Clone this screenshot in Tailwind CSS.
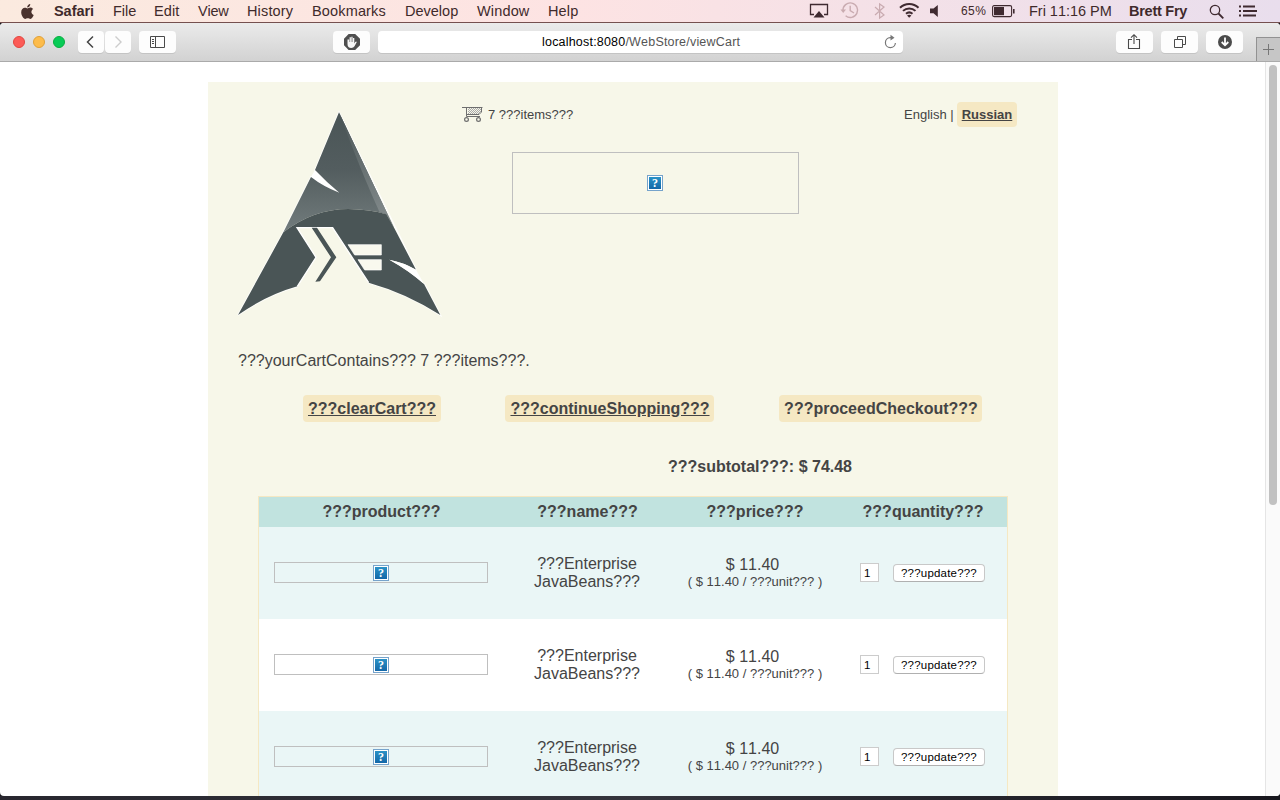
<!DOCTYPE html>
<html lang="en">
<head>
<meta charset="utf-8">
<title>WebStore cart</title>
<script src="https://cdn.jsdelivr.net/npm/@tailwindcss/browser@4"></script>
</head>
<body class="h-[800px] w-[1280px] overflow-hidden bg-[#17161c] font-['Liberation_Sans',sans-serif] text-[#444] [font-kerning:none]">
<div class="flex h-full flex-col">
  <!-- Menu bar -->
  <div class="flex h-[23px] shrink-0 items-center border-b border-[#75504f] bg-linear-to-r from-[#fbeadf] via-[#fde3e3] via-45% to-[#e9deed] text-[14.5px] leading-[22px] tracking-[0.15px] text-[#3f2a2b]">
    <div class="w-[54px] shrink-0 pl-[20px]"><svg width="15" height="17" viewBox="0 0 15 17" fill="#4a322e"><path d="M10.3 1C10.3 2.9 8.9 4.5 7.2 4.5 7 2.8 8.6 1.1 10.3 1ZM7.4 5.4C8.1 5.4 9 4.6 10.3 4.6 11.4 4.6 12.5 5.2 13.2 6.1 10.6 7.5 11 11.1 13.7 12.1 13.1 13.7 11.9 15.9 10.4 15.9 9.4 15.9 9 15.3 7.8 15.3 6.5 15.3 6.1 15.9 5.2 15.9 3.6 15.9 1.2 12.7 1.2 9.3 1.2 6.3 3 4.7 4.9 4.7 6 4.7 6.8 5.4 7.4 5.4Z"/></svg></div>
    <b class="w-[59px] shrink-0 tracking-[-0.05px]">Safari</b>
    <span class="w-[41px] shrink-0 tracking-[-0.05px]">File</span>
    <span class="w-[44px] shrink-0 tracking-[0.1px]">Edit</span>
    <span class="w-[49px] shrink-0 tracking-[-0.2px]">View</span>
    <span class="w-[65px] shrink-0">History</span>
    <span class="w-[93px] shrink-0">Bookmarks</span>
    <span class="w-[72px] shrink-0 tracking-[0px]">Develop</span>
    <span class="w-[71px] shrink-0">Window</span>
    <span class="w-[256px] shrink-0">Help</span>
    <svg class="shrink-0" width="152" height="22" viewBox="804 0 152 22" fill="none" stroke="#3f2a30">
      <path d="M814 14.500H810.500V4.500H827.500V14.500H824" stroke-width="1.300"/><path d="M819 11l5.500 6.500h-11z" fill="#3f2a30" stroke="none"/>
      <g stroke="#c9abb0" stroke-width="1.400"><path d="M843 10.500A7.300 7.300 0 1 1 845.600 15.800"/><path d="M850.200 5.800V10.600L854 13"/><path d="M840.500 9.500h5.500l-2.800 3.400z" fill="#c9abb0" stroke="none"/><path d="M875 7l9 8-4.400 3V4l4.400 3-9 8" stroke-width="1.200"/></g>
      <g stroke-width="2"><path d="M900 7.800a13 13 0 0 1 18.500 0"/><path d="M903 10.900a9 9 0 0 1 12.500 0"/><path d="M906 13.800a5 5 0 0 1 6.500 0"/></g><path d="M909.200 17.800l-2.200-2.400q2.200-1.500 4.400 0z" fill="#3f2a30" stroke="none"/>
      <path d="M930 8.500h3.500l4.300-3.600v12l-4.300-3.700H930z" fill="#3f2a30" stroke="none"/>
    </svg>
    <span class="w-[36px] shrink-0 pl-[5px] text-[12px] tracking-[0.45px]">65%</span>
    <svg class="shrink-0" width="37" height="22" viewBox="992 0 37 22"><rect x="992.600" y="5.600" width="19" height="11" rx="1.500" fill="none" stroke="#3f2a30" stroke-width="1.100"/><path d="M994 7h10v8.200h-10z" fill="#3f2a30"/><path d="M1013 9h1.600v4.500h-1.600z" fill="#3f2a30"/></svg>
    <span class="w-[100px] shrink-0 tracking-[-0.02px] whitespace-nowrap">Fri 11:16 PM</span>
    <b class="w-[71px] shrink-0 tracking-[-0.25px] whitespace-nowrap">Brett Fry</b>
    <svg class="shrink-0" width="80" height="22" viewBox="1200 0 80 22" fill="none" stroke="#3f2a30"><circle cx="1215" cy="10" r="4.700" stroke-width="1.300"/><path d="M1218.500 13.500l4.800 4.800" stroke-width="1.800"/><path d="M1239 6.500h2m-2 4.500h2m-2 4.500h2M1243 6.500h12M1243 11h14M1243 15.500h13" stroke-width="1.800"/></svg>
  </div>
  <!-- Safari window -->
  <div class="flex h-[773px] shrink-0 flex-col overflow-hidden rounded-[4px] bg-white">
    <div class="flex h-[39px] shrink-0 border-b border-[#aaa] bg-linear-to-b from-[#ebebeb] to-[#d2d2d2]">
      <div class="flex w-[78px] gap-[8px] pt-[13px] pl-[13px]">
        <i class="size-[12px] rounded-full border border-[#e2463f] bg-[#fc5b57]"></i><i class="size-[12px] rounded-full border border-[#e0a138] bg-[#fdbc4b]"></i><i class="size-[12px] rounded-full border border-[#08ae40] bg-[#08cb56]"></i>
      </div>
      <div class="flex pt-[8px] *:h-[22px] *:shrink-0 *:rounded-[4px] *:bg-[#fdfdfd] *:shadow-[0_1px_0_#c4c4c4]">
        <div class="w-[26px]"><svg width="26" height="22" fill="none" stroke="#444" stroke-width="1.500"><path d="M15 5.500L9.500 11l5.500 5.500"/></svg></div>
        <div class="ml-px w-[26px]"><svg width="26" height="22" fill="none" stroke="#ccc" stroke-width="1.400"><path d="M10.500 5.500L16 11l-5.500 5.500"/></svg></div>
        <div class="ml-[8px] w-[37px]"><svg width="37" height="22" fill="none" stroke="#4a4a4a"><path d="M11.500 5.500h14v11h-14zM16.500 5.500v11M13 8.500h2M13 10.500h2M13 12.500h2"/></svg></div>
        <div class="ml-[157px] w-[37px]"><svg width="37" height="22"><path d="M15.600 3h6.600l4.800 4.700v6.600L22.200 19h-6.600L11 14.300V7.700z" fill="#4f4f4f"/><path d="M14.500 8.500v4.500q0 4 3.800 4 2.200 0 3.200-1.800l2.300-4.300q-.8-.8-1.600.2l-.9 1.300V7h-1.300v4h-.4V5.800h-1.300V11h-.4V6.300h-1.300V11h-.4V8.500z" fill="#f7f7f7"/></svg></div>
        <div class="ml-[8px] flex w-[525px] items-center bg-white! text-[12.5px]"><span class="w-[501px] pt-px pl-[164px] tracking-[0.2px] whitespace-nowrap text-[#555]"><span class="text-black">localhost:8080</span>/WebStore/viewCart</span><svg width="22" height="22" fill="none" stroke="#777" stroke-width="1.200"><path d="M12.600 6.700H11.200A5 5 0 1 0 16.400 12"/><path d="M11.500 3.800l4 3-4 2.800z" fill="#777" stroke="none"/></svg></div>
        <div class="ml-[213px] w-[37px]"><svg width="37" height="22" fill="none" stroke="#4a4a4a" stroke-width="1.100"><path d="M16 8.500h-3.500v9h11v-9H20M18 13V3.800M15 6.700l3-3 3 3"/></svg></div>
        <div class="ml-[8px] w-[37px]"><svg width="37" height="22" fill="none" stroke="#4a4a4a"><path d="M13.500 8.500h8v8h-8zM16.500 8.500v-3h8v8h-3"/></svg></div>
        <div class="ml-[8px] w-[37px]"><svg width="37" height="22"><circle cx="19" cy="11" r="7" fill="#4b4b4b"/><path d="M19 6.500v7M15.700 11l3.300 3.300 3.300-3.300" fill="none" stroke="#fff" stroke-width="1.800"/></svg></div>
      </div>
      <div class="mt-[14px] ml-[13px] h-[24px] w-[24px] shrink-0 border-t border-l border-[#929292] bg-[#c6c6c6]"><svg width="23" height="23" stroke="#777"><path d="M6 11.500h11M11.500 6v11"/></svg></div>
    </div>
    <div class="flex min-h-0 flex-1">
      <div class="flex-1 pt-[20px] pl-[208px]">
        <div class="h-[714px] w-[850px] bg-[#f7f7e9]">
          <!-- Page header -->
          <div class="flex h-[258px]">
            <svg class="mt-[13px] ml-[12px] shrink-0" width="240" height="230" viewBox="0 0 720 690">
              <defs>
                <linearGradient id="up" x1="0" y1="50" x2="0" y2="400" gradientUnits="userSpaceOnUse"><stop offset="0" stop-color="#4a5556"/><stop offset=".5" stop-color="#535d5f"/><stop offset="1" stop-color="#707a7b"/></linearGradient>
                <linearGradient id="edge" x1="360" y1="60" x2="500" y2="370" gradientUnits="userSpaceOnUse"><stop offset="0" stop-color="#4c5758"/><stop offset="1" stop-color="#838b8c"/></linearGradient>
              </defs>
              <path d="M232 574Q140 600 54 660L190 412 273 246Q310 275 358 293L285 225 357 52 588 524M612 565L661 660Q560 595 446 563" fill="none" stroke="#fff" stroke-width="5" opacity=".8"/>
              <path d="M285 225Q320 262 358 293Q310 275 273 246Z" fill="#fff"/>
              <path d="M357 52L285 225Q320 262 358 293Q310 275 273 246L190 412Q280 342 385 342 450 343 499 358L523 400Z" fill="url(#up)"/>
              <path d="M357 52L523 400 499 358 478 350Q425 235 357 52Z" fill="url(#edge)"/>
              <path d="M190 412Q280 342 385 342 450 343 499 358L523 400 588 524Q550 502 508 494 572 530 612 567L661 660Q560 595 446 563L338 398H231L288 487 232 574Q140 600 54 660Z" fill="#4a5556"/>
              <path d="M446 563L338 398H231L288 487 232 574" fill="none" stroke="#fff" stroke-width="4"/>
              <path d="M275 398H291L349 487 300 559 286 560 333 487Z" fill="#4a5556"/>
              <path d="M384 449H484V480H404ZM414 494H484V525H434Z" fill="#f9f9ee" stroke="#fff" stroke-width="2"/>
              <path d="M508 494Q550 502 588 524L612 567Q565 525 508 494Z" fill="#fff"/>
            </svg>
            <div class="w-[442px] shrink-0 pl-[2px]">
              <div class="flex h-[70px] pt-[24px] text-[13px] leading-[17px]"><svg width="22" height="17" fill="none" stroke="#6e6e6e"><path d="M0 1.500h20.500M4.500 2v8.500h13.500M4.500 8.500h12.500l2.500-2.500v-4.500"/><path d="M6 3.500h13M6 5.500h13M6 7.500h11" stroke="#aaa" stroke-dasharray="1 1"/><path d="M7 2.500h12M7 4.500h12M7 6.500h11" stroke="#aaa" stroke-dasharray="1 1"/><circle cx="4.500" cy="13.500" r="1.900" stroke-width="1.200"/><circle cx="16.500" cy="13.500" r="1.900" stroke-width="1.200"/></svg><span class="ml-[4px]">7 ???items???</span></div>
              <div class="ml-[50px] flex h-[62px] w-[287px] items-center justify-center border border-[#bfbfbf] pr-px">
                <div class="size-[16px] border border-[#76a3cb] bg-white p-px"><div class="size-[12px] bg-linear-to-b from-[#2a92c6] to-[#1468a8] text-center font-['Liberation_Serif',serif] text-[12px] leading-[12px] font-bold text-white">?</div></div>
              </div>
            </div>
            <div class="mt-[20px] ml-[2px] flex h-[25px] text-[13px] leading-[25px] whitespace-nowrap"><span class="w-[53px]">English |</span><b class="w-[60px] rounded-[4px] bg-[#f5e8c3] text-center underline">Russian</b></div>
          </div>
          <p class="h-[55px] pt-[12px] pl-[30px] text-[16px] leading-[18px]">???yourCartContains??? 7 ???items???.</p>
          <div class="flex h-[61px] pl-[95px] text-[16px] leading-[27px] font-bold *:h-[27px] *:rounded-[4px] *:bg-[#f5e8c3] *:text-center">
            <a class="w-[138px] underline">???clearCart???</a><a class="ml-[64px] w-[209px] pl-px underline">???continueShopping???</a><a class="ml-[65px] w-[203px] pl-px">???proceedCheckout???</a>
          </div>
          <p class="h-[40px] pt-[2px] pl-[460px] text-[16px] leading-[18px] font-bold">???subtotal???: $ 74.48</p>
          <!-- Cart table -->
          <div class="ml-[50px] h-[300px] w-[750px] overflow-hidden border border-b-0 border-[#f5e8c3] text-[16px]">
            <div class="grid h-[30px] grid-cols-[244px_168px_168px_168px] bg-[#c1e3df] text-center leading-[30px] font-bold"><span class="pl-px">???product???</span><span class="pl-px">???name???</span><span>???price???</span><span>???quantity???</span></div>
            <div id="rows"></div>
          </div>
        </div>
      </div>
      <div class="w-[15px] shrink-0 border-l border-[#e5e5e5] bg-[#fafafa] pt-[3px] pl-[3px]"><div class="h-[440px] w-[8px] rounded-full bg-[#c1c1c1]"></div></div>
    </div>
  </div>
  <div class="h-[4px] bg-linear-to-r from-[#28272f] via-[#34343c] to-[#18171e]"></div>
</div>
<template id="row">
  <div class="grid h-[92px] grid-cols-[244px_168px_168px_168px] items-center text-center odd:bg-[#eaf6f6] even:bg-white">
    <div class="mb-px ml-[15px] flex h-[21px] w-[214px] items-center justify-center border border-[#bfbfbf]">
      <div class="mt-px size-[16px] shrink-0 border border-[#76a3cb] bg-white p-px"><div class="size-[12px] bg-linear-to-b from-[#2a92c6] to-[#1468a8] text-center font-['Liberation_Serif',serif] text-[12px] leading-[12px] font-bold text-white">?</div></div>
    </div>
    <div class="leading-[18px]">???Enterprise<br>JavaBeans???</div>
    <div class="leading-[18px]"><div class="pr-[5px]">$ 11.40</div><div class="text-[13px] leading-[16px]">( $ 11.40 / ???unit??? )</div></div>
    <div class="flex items-center pl-[21px] text-left text-[11.5px] text-black"><span class="mb-[2px] h-[19px] w-[19px] border border-[#ccc] bg-white pl-[3px] leading-[18px]">1</span><span class="ml-[14px] h-[18px] w-[92px] rounded-[4px] border border-[#c8c8c8] border-b-[#b0b0b0] bg-white text-center leading-[17px] tracking-[0.2px]">???update???</span></div>
  </div>
</template>
<script>
  for (let i = 0; i < 3; i++) document.getElementById('rows').append(document.getElementById('row').content.cloneNode(true));
</script>
</body>
</html>
